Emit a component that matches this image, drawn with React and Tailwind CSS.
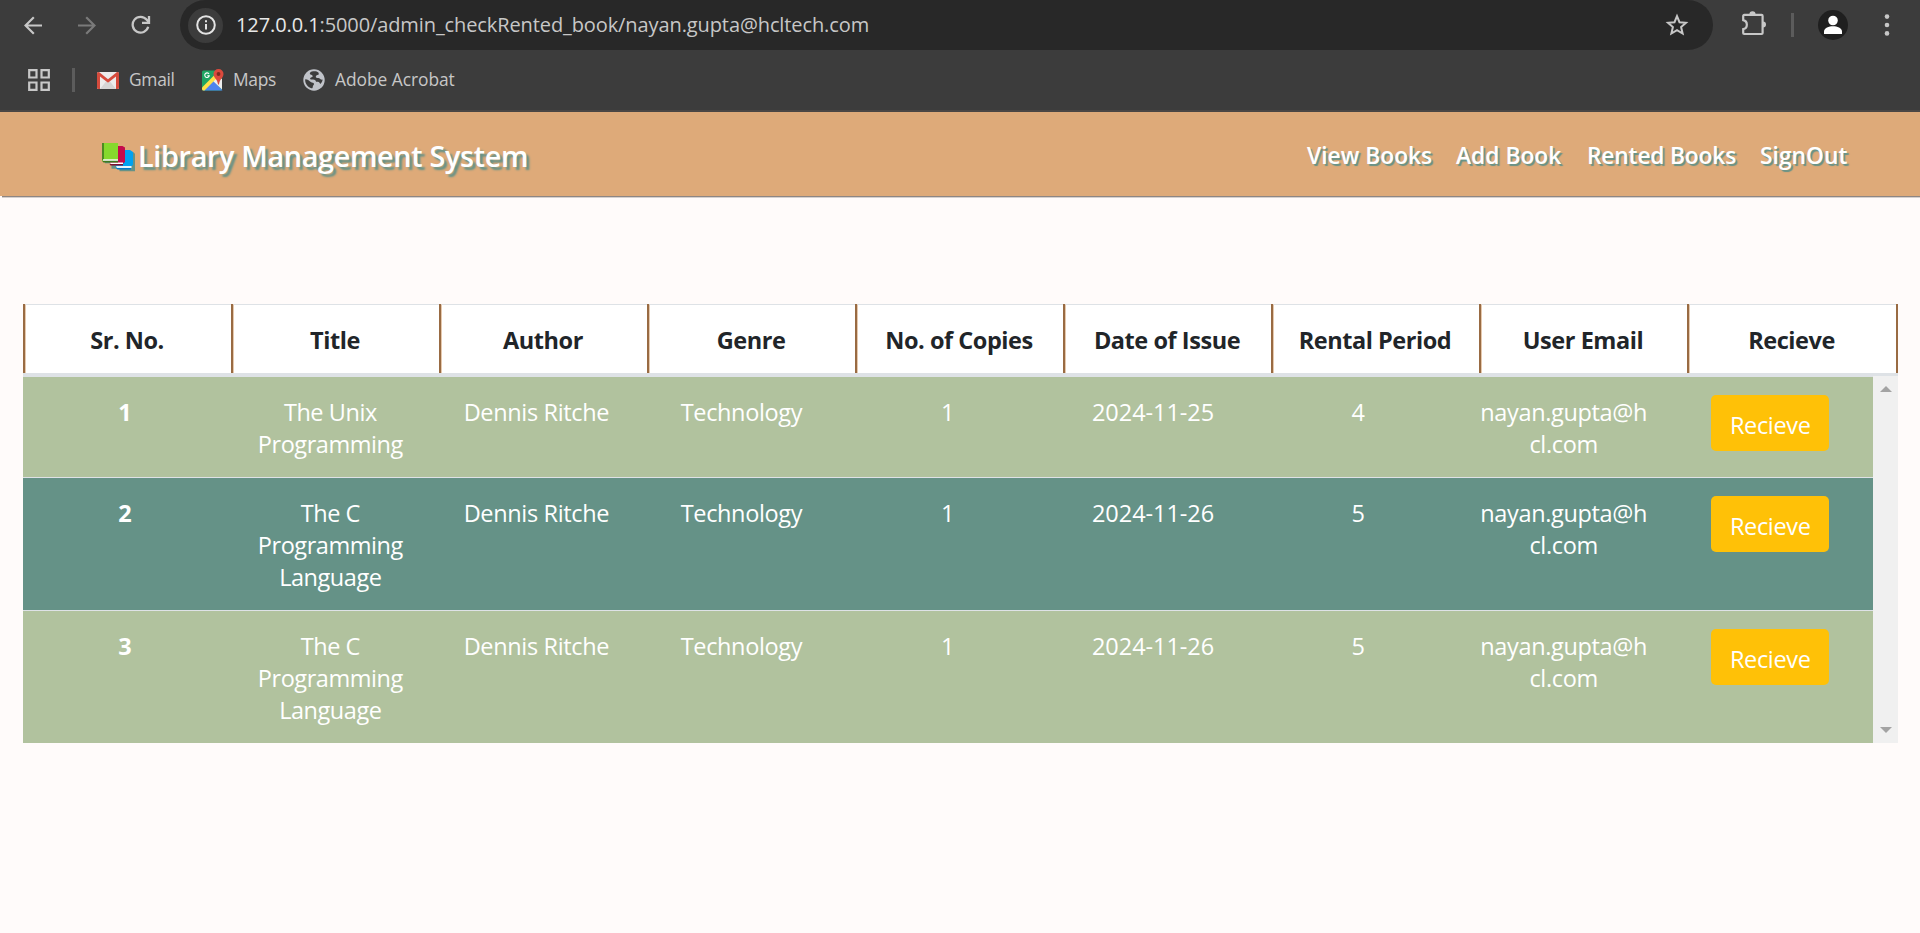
const COLUMNS = [
  'Sr. No.',
  'Title',
  'Author',
  'Genre',
  'No. of Copies',
  'Date of Issue',
  'Rental Period',
  'User Email',
  'Recieve',
];

const ROWS = [
  { id: 1, title: ['The Unix', 'Programming'], author: 'Dennis Ritche', genre: 'Technology', copies: 1, date: '2024-11-25', period: 4 },
  { id: 2, title: ['The C', 'Programming', 'Language'], author: 'Dennis Ritche', genre: 'Technology', copies: 1, date: '2024-11-26', period: 5 },
  { id: 3, title: ['The C', 'Programming', 'Language'], author: 'Dennis Ritche', genre: 'Technology', copies: 1, date: '2024-11-26', period: 5 },
];

function BrowserToolbar() {
  return (
    <div className="flex h-[50px] items-center text-[#c7c7c7]">
      <svg className="ml-[24px] h-[19px] w-[18px] shrink-0" viewBox="0 0 18 19" fill="none" stroke="#c7c7c7" strokeWidth="2.2">
        <path d="M18 9.5H2M9.8 1.2L1.5 9.5l8.3 8.3" />
      </svg>
      <svg className="ml-[36px] h-[19px] w-[18px] shrink-0" viewBox="0 0 18 19" fill="none" stroke="#7a7a7a" strokeWidth="2.2">
        <path d="M0 9.5h16M8.2 1.2l8.3 8.3-8.3 8.3" />
      </svg>
      <svg className="ml-[35px] h-[20px] w-[20px] shrink-0" viewBox="0 0 20 20" fill="none" stroke="#c7c7c7" strokeWidth="2.3">
        <path d="M17.2 11.8A7.9 7.9 0 1 1 15.8 4.8L17.6 7" />
        <path d="M18 1v6.8h-7" />
      </svg>
      <div className="ml-[29px] flex h-[50px] w-[1533px] shrink-0 items-center rounded-full bg-[#282828]">
        <div className="ml-[8px] flex size-[35px] items-center justify-center rounded-full bg-[#3c3c3c]">
          <svg className="size-[20px]" viewBox="0 0 20 20" fill="none" stroke="#e3e3e3" strokeWidth="2">
            <circle cx="10" cy="10" r="8.8" />
            <path d="M10 9v5.6M10 5.2v2.1" />
          </svg>
        </div>
        <div className="ml-[13px] text-[20px] leading-[28px] tracking-[-0.1px] whitespace-nowrap text-[#c7c7c7]">
          <span className="text-[#e8e8e8]">127.0.0.1</span>:5000/admin_checkRented_book/nayan.gupta@hcltech.com
        </div>
        <svg className="mr-[24px] ml-auto size-[24px]" viewBox="0 0 24 24" fill="none" stroke="#c7c7c7" strokeWidth="2">
          <path d="M12 3.2l2.5 6 6.5.6-4.9 4.3 1.5 6.4L12 17.1l-5.6 3.4 1.5-6.4L3 9.8l6.5-.6z" />
        </svg>
      </div>
      <svg className="mb-[3px] ml-[28px] h-[25px] w-[26px] shrink-0" viewBox="0 0 26 25">
        <path d="M3.2 3.9H20.6a1 1 0 0 1 1 1V22a1 1 0 0 1-1 1H3.2a1 1 0 0 1-1-1V18.2a4.6 4.6 0 0 0 0-9V4.9a1 1 0 0 1 1-1z" fill="none" stroke="#c7c7c7" strokeWidth="2.2" />
        <path d="M8.4 3.4a3.1 3.1 0 0 1 6.2 0zM22 10.6a3 3 0 0 1 0 6z" fill="#c7c7c7" />
      </svg>
      <div className="ml-[24px] h-[24px] w-[3px] bg-[#5c5c5c]" />
      <svg className="ml-[24px] size-[30px] shrink-0" viewBox="0 0 30 30">
        <circle cx="15" cy="15" r="15" fill="#1f1f1f" />
        <circle cx="15" cy="10.5" r="4.8" fill="#fff" />
        <path d="M6 24v-2.4c0-3.6 5-5.3 9-5.3s9 1.7 9 5.3V24z" fill="#fff" />
      </svg>
      <svg className="ml-[36px] h-[22px] w-[6px] shrink-0" viewBox="0 0 6 22" fill="#c7c7c7">
        <circle cx="3" cy="2.6" r="2.3" />
        <circle cx="3" cy="11" r="2.3" />
        <circle cx="3" cy="19.4" r="2.3" />
      </svg>
    </div>
  );
}

function BookmarksBar() {
  return (
    <div className="flex h-[60px] items-center text-[17.4px] leading-[24px] text-[#c7c7c7]">
      <svg className="ml-[28px] size-[22px]" viewBox="0 0 22 22" fill="none" stroke="#c7c7c7" strokeWidth="2.2">
        <path d="M1.2 1.2h7.3v7.3H1.2zM13.5 1.2h7.3v7.3h-7.3zM1.2 13.5h7.3v7.3H1.2zM13.5 13.5h7.3v7.3h-7.3z" />
      </svg>
      <div className="ml-[22px] h-[24px] w-[3px] bg-[#5c5c5c]" />
      <svg className="ml-[22px] h-[17px] w-[22px]" viewBox="0 0 22 17">
        <rect width="22" height="17" rx="1.5" fill="#ececec" />
        <path d="M3 17l6-7.5L11 11l2-1.5L19 17z" fill="#d5d5d5" />
        <path d="M0 1.5A1.5 1.5 0 0 1 1.5 0H2l9 7.2L20 0h.5A1.5 1.5 0 0 1 22 1.5v14A1.5 1.5 0 0 1 20.500 17H19V4.5l-8 6.3L3 4.5V17H1.5A1.5 1.5 0 0 1 0 15.5z" fill="#d54b3d" />
      </svg>
      <span className="ml-[10px] w-[46px] pb-[2px] tracking-[-0.3px]">Gmail</span>
      <svg className="mb-[1px] ml-[27px] h-[22px] w-[22px]" viewBox="0 0 22 22">
        <rect y="1.5" width="20" height="20" rx="1.5" fill="#1fa463" />
        <path d="M1 21.5L11 11l9.5 10.5z" fill="#4f83ee" />
        <path d="M11 12l4-4 5 2v10.5z" fill="#eee" />
        <path d="M0 18.5L12.5 6l3 2.5L2.5 21.5H1.5A1.5 1.5 0 0 1 0 20z" fill="#ffe047" />
        <path d="M16.5 0A5 5 0 0 1 21.5 5c0 4-4 5-4.5 10.5h-1C15.5 10 11.5 9 11.5 5a5 5 0 0 1 5-5z" fill="#dc4a3d" />
        <circle cx="16.5" cy="5" r="1.9" fill="#7c2a20" />
        <path d="M7 4.9A2.3 2.3 0 1 0 7.3 6.7H5.3" fill="none" stroke="#fff" strokeWidth="1.1" />
      </svg>
      <span className="ml-[9px] w-[44px] pb-[2px] tracking-[-0.3px]">Maps</span>
      <svg className="ml-[26px] size-[22px]" viewBox="0 0 22 22">
        <circle cx="11" cy="11" r="10.7" fill="#c0c3c9" />
        <path d="M11.5 2.3C8.5 1.8 7 3 6.8 4.7c.4 1.2 2.6.8 2.9 2.2.2 1.5-2.3.9-2.6 2.5-.1 1 1 1.1 2.9 1.1 2.1 0 3 1 3 2.3h1.9c1.400 0 1.600 1.500 2.500 2.100 1.100-.9 2.200-2.700 2.200-4.300-1.600.3-2.200-.6-3.300-1.300-1.300-.6-2.900.2-3.400-1-.5-1.700 1-2.400 2.400-2.600.7-.4.5-1.400.1-2.300-1-.6-2.300-1.100-3.900-1.100zM2.200 10.300c-.4 4 2.300 8 6.300 8.900.9.200 1.300-.5 1.300-1.500 0-1.300 1.200-1.400 1.200-2.700-.1-1.600-2.100-1-3.200-1.900C6.600 12 4.800 10.500 2.200 10.300z" fill="#3c3c3c" />
      </svg>
      <span className="ml-[10px] pb-[2px] tracking-[-0.05px] whitespace-nowrap">Adobe Acrobat</span>
    </div>
  );
}

function BooksIcon() {
  return (
    <svg className="h-[32px] w-[34px] shrink-0" viewBox="0 0 34 32">
      <path d="M16 9.5h14l1.5 1.5v17.5H16z" transform="translate(1.5 1.8)" fill="#659287" />
      <path d="M1.5 3.5h16v17h-16zM8 8h15v18H8z" transform="translate(1.5 1.8)" fill="#659287" />
      <path d="M14 9h14l3 2v12.5l-3 3.5H14z" fill="#00a1f1" />
      <path d="M14 25h15.5v2H15z" fill="#fff" opacity=".9" />
      <path d="M14 27h15v1.5H15.5z" fill="#0078c8" />
      <path d="M7 5h13.5l2.5 1.5V21l-3 2.5H8z" fill="#c40b4b" />
      <path d="M8 21.5h13v1.6H8.5z" fill="#fff" />
      <path d="M7.5 23h13.5v1.5H8.5z" fill="#80102f" />
      <path d="M0 2h16v18H0z" fill="#86d92d" />
      <path d="M0 2h2v17H0z" fill="#4d8a22" />
      <path d="M1 18.3h15v1.7H1z" fill="#fff" />
      <path d="M0 19.8h16v1.6H1.5z" fill="#3d7a1e" />
    </svg>
  );
}

function SiteHeader() {
  return (
    <header className="flex h-[84px] items-center bg-[#deaa79] font-semibold text-white">
      <div className="flex items-center pl-[102px]">
        <div className="pt-[5px]">
          <BooksIcon />
        </div>
        <h1 className="pt-[3px] pl-[2px] text-[28.8px] leading-[40px] tracking-[-0.35px] whitespace-nowrap [text-shadow:3px_3px_2px_#659287]">
          Library Management System
        </h1>
      </div>
      <nav className="ml-auto flex pt-[3px] pr-[69px] text-[22.8px] leading-[34px] whitespace-nowrap [text-shadow:2px_2px_1px_#659287]">
        <a className="w-[149px]">View Books</a>
        <a className="w-[131px]">Add Book</a>
        <a className="w-[173px] tracking-[-0.2px]">Rented Books</a>
        <a className="w-[91px]">SignOut</a>
      </nav>
    </header>
  );
}

function BookRow({ row }) {
  const light = row.id % 2 === 1;
  return (
    <div
      className={
        'grid grid-cols-9 text-center text-[23.5px] leading-[32px] tracking-[-0.35px] text-white ' +
        (light ? 'bg-[#b1c29e] ' : 'bg-[#659287] ') +
        (row.id === 3 ? '' : 'border-b border-[#dee2e6]')
      }
    >
      <div className="pt-[19px] pr-[2px] pb-[17px] font-bold">{row.id}</div>
      <div className="pt-[19px] pr-[2px] pb-[17px] tracking-[-0.45px]">
        {row.title.map((line) => (
          <div key={line}>{line}</div>
        ))}
      </div>
      <div className="pt-[19px] pr-px">{row.author}</div>
      <div className="pt-[19px] pr-[2px]">{row.genre}</div>
      <div className="pt-[19px] pr-px">{row.copies}</div>
      <div className="pt-[19px] pr-px tracking-[-0.05px]">{row.date}</div>
      <div className="pt-[19px] pr-[2px]">{row.period}</div>
      <div className="pt-[19px] pr-[2px]">
        nayan.gupta@h
        <br />
        cl.com
      </div>
      <div className="pt-[18px]">
        <button className="h-[56px] w-[118px] rounded-[5px] bg-[#ffc107] pt-[3px]">Recieve</button>
      </div>
    </div>
  );
}

export default function App() {
  return (
    <div className="h-[933px] w-[1920px] overflow-hidden bg-[#fffbfa] font-['Open_Sans','Noto_Sans',sans-serif]">
      <div className="bg-[#3c3c3c]">
        <BrowserToolbar />
        <BookmarksBar />
        <div className="h-[2px] bg-[#4a4644]" />
      </div>
      <SiteHeader />
      <div className="ml-[2px] h-px bg-[#8e8683]" />
      <div className="ml-[2px] h-px bg-[#d5d0ce]" />
      <main className="mt-[106px] ml-[23px] w-[1875px]">
        <div className="grid grid-cols-[repeat(8,208px)_211px] border-b-[3px] border-[#dee2e6] bg-white text-center text-[23.5px] leading-[32px] font-bold tracking-[-0.45px] text-[#212529]">
          {COLUMNS.map((name, i) => (
            <div
              key={name}
              className={
                'h-[69px] border-l-2 border-l-[#996b43] ' + (i === 8 ? 'border-r-2 border-r-[#996b43]' : '')
              }
            >
              <div className="h-full border-t border-l border-t-[#dee2e6] border-l-[#e6c9ae] pt-[19px] pr-[3px] whitespace-nowrap">{name}</div>
            </div>
          ))}
        </div>
        <div className="flex">
          <div className="w-[1850px] border-t border-[#dee2e6]">
            {ROWS.map((row) => (
              <BookRow key={row.id} row={row} />
            ))}
          </div>
          <div className="flex w-[25px] flex-col items-center justify-between bg-[#f0f0f0] pt-[10px] pb-[10px]">
            <svg className="h-[6px] w-[12px]" viewBox="0 0 12 6" fill="#a3a3a3">
              <path d="M0 6L6 0l6 6z" />
            </svg>
            <svg className="h-[6px] w-[12px]" viewBox="0 0 12 6" fill="#a3a3a3">
              <path d="M0 0l6 6 6-6z" />
            </svg>
          </div>
        </div>
      </main>
    </div>
  );
}
